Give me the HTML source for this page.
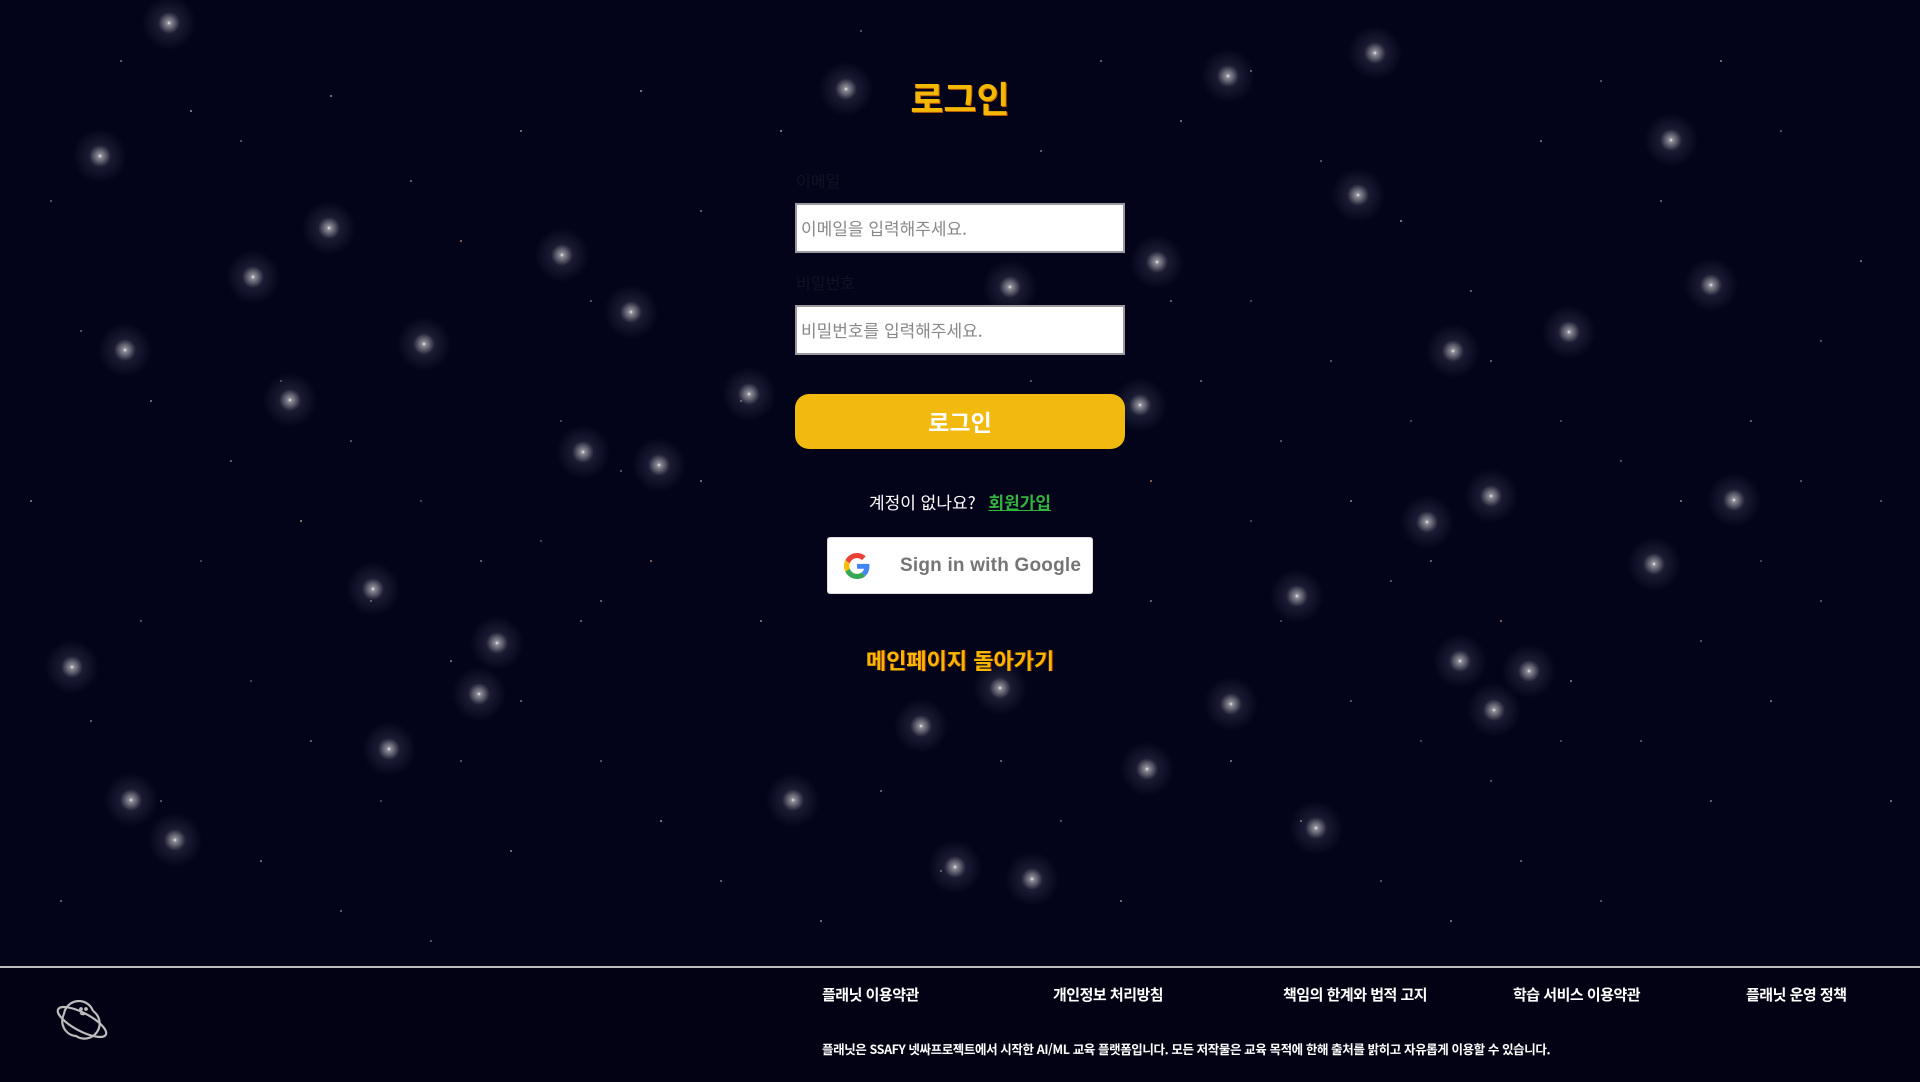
<!DOCTYPE html>
<html lang="ko"><head><meta charset="utf-8">
<style>
html,body{margin:0;padding:0}
body{width:1920px;height:1080px;overflow:hidden;background:#03031a;position:relative;font-family:"Liberation Sans","Noto Sans CJK KR",sans-serif}
.g{position:absolute;width:70px;height:70px;margin:-35px 0 0 -35px;border-radius:50%;background:radial-gradient(circle,rgba(255,255,255,.95) 0,rgba(255,255,255,.55) 4%,rgba(200,200,230,.12) 22%,rgba(200,200,230,0) 55%)}
.d{position:absolute;left:0;top:0;width:2px;height:2px;border-radius:50%;background:transparent}
.title{position:absolute;left:0;width:1920px;top:72px;text-align:center;color:#f5b800;font-size:36px;font-weight:bold;font-family:"Noto Sans CJK KR",sans-serif;line-height:50px;text-shadow:1px 1px 0 #b85a00}
.lab{position:absolute;left:796px;color:#121222;font-size:16px;font-family:"Noto Sans CJK KR",sans-serif}
.inp{position:absolute;left:795px;width:322px;height:46px;background:#fff;border:2px solid #9a9a9a;color:#888;font-size:17px;line-height:46px;padding-left:4px;font-family:"Noto Sans CJK KR",sans-serif}
.btn{position:absolute;left:795px;top:394px;width:330px;height:55px;border-radius:14px;background:#f2b90f;color:#fff;font-size:23px;font-weight:bold;text-align:center;line-height:55px;font-family:"Noto Sans CJK KR",sans-serif}
.acct{position:absolute;left:0;width:1920px;top:488px;text-align:center;color:#fff;font-size:17px;font-family:"Noto Sans CJK KR",sans-serif;line-height:28px}
.acct a{color:#35b33f;font-weight:bold;text-decoration:underline;margin-left:8px}
.gbtn{position:absolute;left:827px;top:537px;width:266px;height:57px;background:#fff;border-radius:3px;border:1px solid #ddd;box-sizing:border-box}
.gbtn span{position:absolute;left:72px;top:0;line-height:55px;color:#757575;font-size:19px;font-weight:bold;font-family:"Liberation Sans",sans-serif;white-space:nowrap;letter-spacing:0.2px}
.back{position:absolute;left:0;width:1920px;top:644px;text-align:center;color:#f5b800;font-size:22px;font-weight:bold;font-family:"Noto Sans CJK KR",sans-serif;line-height:32px;text-shadow:1px 0 0 #b03000}
.foot{position:absolute;left:0;top:966px;width:1920px;height:114px;background:#020214;border-top:2px solid #bdbdbd}
.fl{position:absolute;top:16px;color:#fff;font-weight:bold;font-size:15px;font-family:"Noto Sans CJK KR",sans-serif;line-height:22px;letter-spacing:-0.5px}
.ft{position:absolute;left:822px;top:72px;color:#fff;font-weight:bold;font-size:12.5px;font-family:"Noto Sans CJK KR",sans-serif;line-height:18px;letter-spacing:-0.4px;white-space:nowrap}
</style></head><body>
<div class="d" style="box-shadow:
120px 60px #778,190px 110px #99a,240px 140px #667,330px 95px #889,410px 180px #778,460px 240px #a76,520px 130px #889,590px 300px #667,640px 90px #99a,700px 210px #778,
80px 330px #667,150px 400px #889,230px 460px #778,300px 520px #a98,370px 600px #667,450px 660px #889,520px 700px #778,600px 760px #667,660px 820px #99a,720px 880px #778,
90px 720px #778,160px 800px #667,260px 860px #889,340px 910px #778,430px 940px #667,510px 850px #889,580px 620px #778,650px 560px #a76,700px 480px #889,740px 400px #667,
1180px 120px #889,1250px 70px #778,1320px 160px #667,1400px 220px #99a,1470px 290px #778,1540px 140px #889,1600px 80px #667,1660px 200px #778,1720px 60px #889,1780px 130px #667,
1200px 380px #778,1280px 440px #667,1350px 500px #889,1430px 560px #778,1500px 620px #a76,1570px 680px #889,1640px 740px #667,1710px 800px #778,1770px 700px #889,1820px 600px #667,
1230px 760px #889,1300px 820px #778,1380px 880px #667,1450px 920px #889,1520px 860px #778,1600px 900px #667,1680px 500px #889,1750px 420px #778,1820px 340px #667,1860px 260px #889,
1000px 760px #778,1060px 820px #667,1120px 900px #889,880px 790px #778,940px 870px #667,820px 920px #889,1100px 60px #778,860px 30px #667,780px 130px #99a,1040px 150px #778,
50px 200px #667,30px 500px #889,60px 900px #778,1880px 500px #667,1890px 800px #889,1150px 600px #778,1150px 480px #a76,760px 620px #889,1030px 380px #667,1170px 300px #778,
280px 380px #556,350px 440px #667,420px 500px #556,480px 560px #778,560px 420px #556,620px 470px #667,200px 560px #556,140px 620px #667,250px 680px #556,310px 740px #778,
380px 800px #556,460px 760px #667,540px 540px #556,600px 600px #778,1250px 300px #556,1330px 360px #667,1410px 420px #556,1490px 360px #778,1560px 420px #556,1620px 460px #667,
1280px 620px #556,1350px 700px #667,1420px 740px #556,1490px 780px #667,1560px 740px #556,1700px 640px #667,1760px 560px #556,1800px 480px #667,1250px 520px #556,1390px 580px #667"></div>
<div class="g" style="left:169px;top:23px"></div><div class="g" style="left:100px;top:156px"></div><div class="g" style="left:329px;top:228px"></div><div class="g" style="left:253px;top:277px"></div><div class="g" style="left:125px;top:350px"></div><div class="g" style="left:424px;top:344px"></div><div class="g" style="left:290px;top:400px"></div><div class="g" style="left:659px;top:465px"></div><div class="g" style="left:583px;top:452px"></div><div class="g" style="left:373px;top:589px"></div><div class="g" style="left:497px;top:643px"></div><div class="g" style="left:72px;top:667px"></div><div class="g" style="left:479px;top:694px"></div><div class="g" style="left:389px;top:749px"></div><div class="g" style="left:131px;top:800px"></div><div class="g" style="left:175px;top:840px"></div><div class="g" style="left:631px;top:312px"></div><div class="g" style="left:562px;top:255px"></div><div class="g" style="left:749px;top:394px"></div><div class="g" style="left:846px;top:89px"></div><div class="g" style="left:1375px;top:53px"></div><div class="g" style="left:1228px;top:76px"></div><div class="g" style="left:1358px;top:195px"></div><div class="g" style="left:1157px;top:262px"></div><div class="g" style="left:1711px;top:285px"></div><div class="g" style="left:1453px;top:351px"></div><div class="g" style="left:1671px;top:140px"></div><div class="g" style="left:1491px;top:496px"></div><div class="g" style="left:1427px;top:522px"></div><div class="g" style="left:1734px;top:500px"></div><div class="g" style="left:1297px;top:596px"></div><div class="g" style="left:1460px;top:661px"></div><div class="g" style="left:1231px;top:704px"></div><div class="g" style="left:1000px;top:688px"></div><div class="g" style="left:921px;top:726px"></div><div class="g" style="left:793px;top:800px"></div><div class="g" style="left:1316px;top:828px"></div><div class="g" style="left:955px;top:867px"></div><div class="g" style="left:1032px;top:879px"></div><div class="g" style="left:1654px;top:564px"></div><div class="g" style="left:1569px;top:332px"></div><div class="g" style="left:1529px;top:671px"></div><div class="g" style="left:1494px;top:710px"></div><div class="g" style="left:1140px;top:405px"></div><div class="g" style="left:1010px;top:287px"></div><div class="g" style="left:1147px;top:769px"></div>

<div class="title">로그인</div>
<div class="lab" style="top:168px">이메일</div>
<div class="inp" style="top:203px">이메일을 입력해주세요.</div>
<div class="lab" style="top:270px">비밀번호</div>
<div class="inp" style="top:305px">비밀번호를 입력해주세요.</div>
<div class="btn">로그인</div>
<div class="acct">계정이 없나요? <a>회원가입</a></div>
<div class="gbtn">
<svg style="position:absolute;left:16px;top:15px" width="26" height="26" viewBox="0 0 48 48"><path fill="#EA4335" d="M24 9.5c3.54 0 6.710 1.22 9.21 3.6l6.85-6.85C35.9 2.38 30.47 0 24 0 14.62 0 6.51 5.38 2.56 13.220l7.98 6.19C12.43 13.72 17.74 9.5 24 9.5z"/><path fill="#4285F4" d="M46.98 24.55c0-1.57-.15-3.09-.38-4.55H24v9.02h12.94c-.58 2.96-2.26 5.48-4.78 7.18l7.73 6c4.51-4.18 7.09-10.36 7.09-17.65z"/><path fill="#FBBC05" d="M10.53 28.59c-.48-1.45-.76-2.99-.76-4.59s.27-3.14.76-4.59l-7.98-6.19C.92 16.46 0 20.12 0 24c0 3.88.92 7.54 2.56 10.78l7.97-6.19z"/><path fill="#34A853" d="M24 48c6.48 0 11.93-2.13 15.89-5.81l-7.73-6c-2.15 1.45-4.92 2.3-8.16 2.3-6.26 0-11.57-4.22-13.47-9.91l-7.98 6.19C6.51 42.62 14.62 48 24 48z"/></svg>
<span>Sign in with Google</span></div>
<div class="back">메인페이지 돌아가기</div>

<div class="foot">
<svg style="position:absolute;left:52px;top:32px" width="60" height="44" viewBox="0 0 60 44" fill="none" stroke="#bdbdbd" stroke-width="2.2"><path d="M12 14 A15 15 0 0 1 41 11"/><path d="M41 11 A15 15 0 0 1 24 36 A15 15 0 0 1 12 14"/><ellipse cx="30" cy="22" rx="27" ry="9" transform="rotate(28 30 22)"/><path d="M28 13 q3 3 6 0" stroke-width="1.6"/><circle cx="29" cy="9" r=".8" fill="#bdbdbd"/><circle cx="34" cy="9" r=".8" fill="#bdbdbd"/></svg>
<div class="fl" style="left:822px">플래닛 이용약관</div>
<div class="fl" style="left:1053px">개인정보 처리방침</div>
<div class="fl" style="left:1283px">책임의 한계와 법적 고지</div>
<div class="fl" style="left:1513px">학습 서비스 이용약관</div>
<div class="fl" style="left:1746px">플래닛 운영 정책</div>
<div class="ft">플래닛은 SSAFY 넷싸프로젝트에서 시작한 AI/ML 교육 플랫폼입니다. 모든 저작물은 교육 목적에 한해 출처를 밝히고 자유롭게 이용할 수 있습니다.</div>
</div>
</body></html>
